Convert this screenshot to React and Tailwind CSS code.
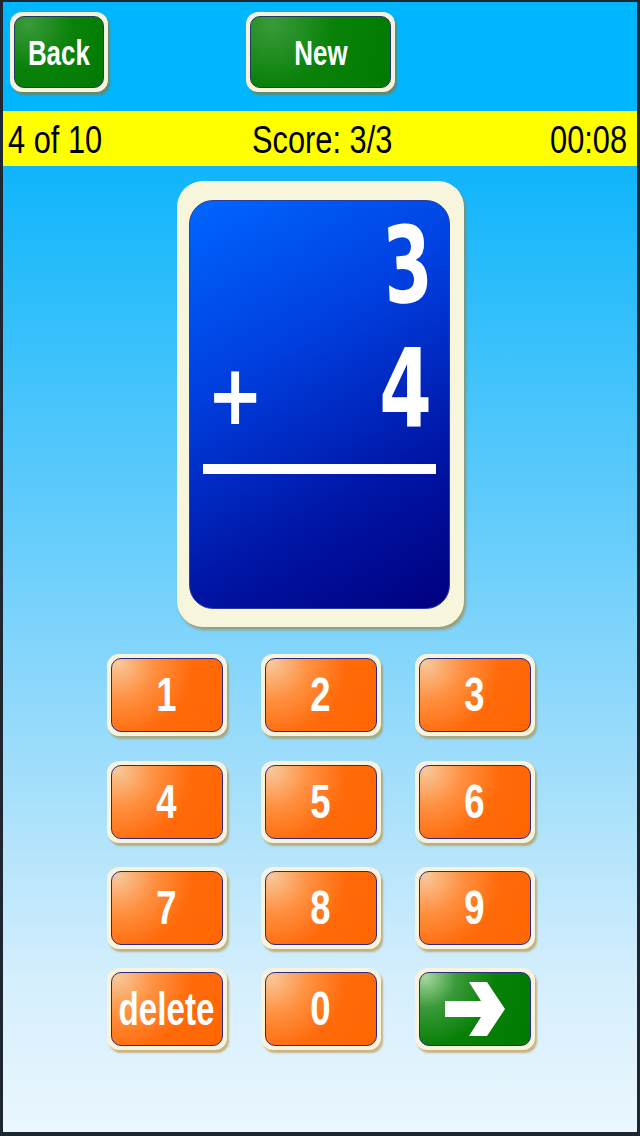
import React from "react";

const sans = { fontFamily: '"Liberation Sans", Arial, sans-serif' };
const hand = { fontFamily: '"DejaVu Sans", sans-serif' };

function GreenTop({ label, w }) {
  return (
    <div className={`${w} h-[80px] rounded-[12px] bg-[#f7f3dc] p-[4px] shadow-[2px_3px_2px_rgba(160,110,20,0.6)]`}>
      <div className="w-full h-full rounded-[10px] border border-[#1c3a6a] bg-[radial-gradient(circle_at_15%_10%,#3a9a3a_0%,#0a820a_45%,#007a00_100%)] flex items-center justify-center">
        <span className="inline-block scale-x-[0.74] text-white font-bold text-[35px] leading-none" style={sans}>{label}</span>
      </div>
    </div>
  );
}

function Key({ children, green }) {
  return (
    <div className="w-[120px] h-[82px] rounded-[12px] bg-[#f7f3dc] p-[4px] shadow-[2px_3px_2px_rgba(180,130,30,0.55)]">
      <div
        className={
          green
            ? "w-full h-full rounded-[10px] border border-[#2a2a80] bg-[radial-gradient(circle_at_5%_5%,#a8d8a0_0%,#3a9a3a_25%,#088008_55%,#007a00_100%)] flex items-center justify-center"
            : "w-full h-full rounded-[10px] border border-[#2a2a80] bg-[radial-gradient(circle_at_5%_5%,#f8c89a_0%,#ff9040_30%,#ff6a0a_60%,#ff6600_100%)] flex items-center justify-center"
        }
      >
        {children}
      </div>
    </div>
  );
}

function Digit({ d }) {
  return (
    <span className="inline-block scale-x-[0.76] text-white font-bold text-[48px] leading-none" style={sans}>
      {d}
    </span>
  );
}

export default function App() {
  const rows = [
    ["1", "2", "3"],
    ["4", "5", "6"],
    ["7", "8", "9"],
  ];
  const rowMt = ["mt-[27px]", "mt-[25px]", "mt-[24px]"];
  return (
    <div className="w-[640px] h-[1136px] bg-[#1e2632] border-l-[3px] border-r-[3px] border-t-[2px] border-b-[4px] border-[#1e2632] flex flex-col overflow-hidden">
      <div className="h-[109px] bg-[#00b6fe] flex items-start pt-[10px] pl-[7px]">
        <GreenTop label="Back" w="w-[98px]" />
        <div className="ml-[138px]">
          <GreenTop label="New" w="w-[149px]" />
        </div>
      </div>
      <div className="relative h-[55px] bg-[#ffff00] text-black text-[38px] leading-none" style={sans}>
        <span className="absolute left-[5px] top-[10px] inline-block origin-left scale-x-[0.81]">4 of 10</span>
        <span className="absolute left-[249px] top-[10px] inline-block origin-left scale-x-[0.81]">Score: 3/3</span>
        <span className="absolute right-[10px] top-[10px] inline-block origin-right scale-x-[0.81]">00:08</span>
      </div>
      <div className="flex-1 bg-[linear-gradient(to_bottom,#10b5fb_0%,#5fcbfb_35%,#9bdcfb_60%,#d6effd_85%,#eaf7fe_100%)] flex flex-col items-center">
        <div className="mt-[15px] w-[287px] h-[446px] rounded-[26px] bg-[#f7f5dc] pl-[12px] pr-[14px] pt-[19px] pb-[18px] shadow-[2px_3px_3px_rgba(170,120,30,0.6)]">
          <div className="relative w-full h-full rounded-[24px] border border-[#2b3f9a] bg-[linear-gradient(150deg,#0066ff_0%,#0040e0_35%,#0014a4_72%,#00007e_100%)] flex flex-col">
            <div className="flex justify-end pr-[4px] pt-[12px] h-[128px]">
              <span className="inline-block scale-x-[0.66] text-white font-bold text-[106px] leading-none -rotate-3" style={hand}>3</span>
            </div>
            <div className="flex justify-between items-center pl-[10px] pr-[5px] h-[110px]">
              <span className="inline-block scale-x-[0.8] text-white font-bold text-[84px] leading-none mt-[22px]" style={hand}>+</span>
              <span className="inline-block scale-x-[0.7] text-white font-bold text-[108px] leading-none mt-[10px]" style={hand}>4</span>
            </div>
            <div className="mt-[25px] mx-[13px] h-[10px] bg-white" />
          </div>
        </div>
        <div className="ml-[1px] flex flex-col">
          {rows.map((r, i) => (
            <div key={i} className={`${rowMt[i]} flex gap-[34px]`}>
              {r.map((d) => (
                <Key key={d}>
                  <Digit d={d} />
                </Key>
              ))}
            </div>
          ))}
          <div className="mt-[19px] flex gap-[34px]">
            <Key>
              <span className="inline-block scale-x-[0.72] text-white font-bold text-[46px] leading-none whitespace-nowrap" style={sans}>delete</span>
            </Key>
            <Key>
              <Digit d="0" />
            </Key>
            <Key green>
              <svg width="60" height="54" viewBox="0 0 60 54">
                <polygon points="0,19 36,19 24,0 42,0 60,27 42,54 24,54 36,35 0,35" fill="#ffffff" />
              </svg>
            </Key>
          </div>
        </div>
      </div>
    </div>
  );
}
